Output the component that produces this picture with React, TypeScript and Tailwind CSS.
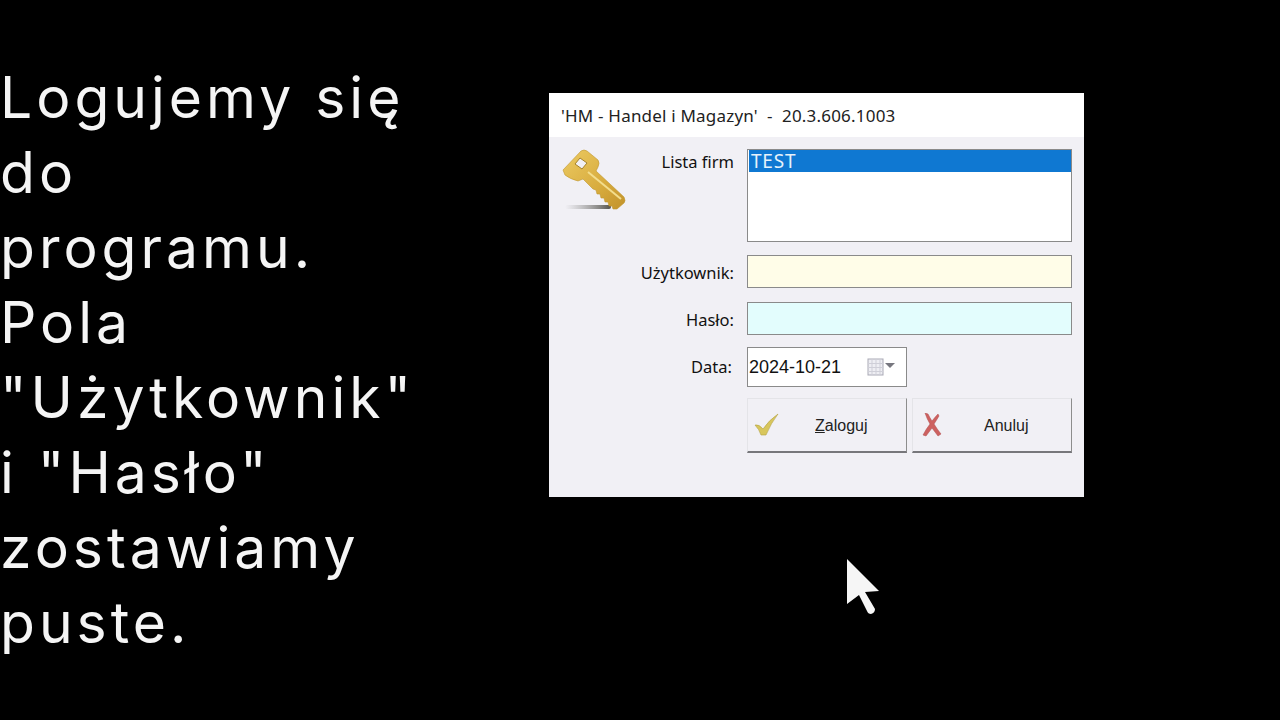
const KeyIcon = () => (
  <svg width="66" height="66" viewBox="0 0 66 66">
    <defs>
      <linearGradient id="gold" x1="0" y1="0" x2="1" y2="1">
        <stop offset="0" stopColor="#ecca62" />
        <stop offset="0.6" stopColor="#d8ac3e" />
        <stop offset="1" stopColor="#c2922a" />
      </linearGradient>
      <linearGradient id="shadow" x1="0" y1="0" x2="1" y2="0">
        <stop offset="0" stopColor="#8a8a8a" stopOpacity="0" />
        <stop offset="1" stopColor="#55534c" />
      </linearGradient>
    </defs>
    <rect x="3" y="56" width="46" height="4" rx="2" fill="url(#shadow)" />
    <path
      d="M1 21 L19 2 Q22 0 25 2 L36 11 Q38 14 36 18 L34 22 L62 48 Q64 52 62 54 L55 60 L51 60 L50 57 L47 57 L46 53 L43 53 L42 49 L39 49 L38 45 L35 45 L34 41 L31 40 L21 30 L16 32 Q8 30 3 26 Z"
      fill="url(#gold)"
      stroke="#c0972f"
      strokeWidth="0.6"
    />
    <path d="M26 23 L59 50" stroke="#f3dd8c" strokeWidth="2" />
    <path d="M18 9 L25 14 L20 20 L13 15 Z" fill="#f1f0f5" stroke="#a5822a" strokeWidth="1" />
  </svg>
);

const CalendarIcon = () => (
  <svg width="28" height="18" viewBox="0 0 28 18">
    <rect x="1" y="1" width="15" height="16" fill="#eeeef3" stroke="#a9a9b5" />
    <path d="M1 5.5H16M1 9.5H16M1 13.5H16M5 1V17M9 1V17M13 1V17" stroke="#cfcfd8" strokeWidth="1" />
    <path d="M18 5H28L23 10Z" fill="#77777f" />
  </svg>
);

const CheckIcon = () => (
  <svg width="26" height="24" viewBox="0 0 26 24">
    <path d="M1 12 Q5 11 9 16 Q15 7 24 1 Q17 10 12 22 L7 22 Q5 16 1 12 Z" fill="#d8c65c" stroke="#b3a344" strokeWidth="0.6" />
  </svg>
);

const CrossIcon = () => (
  <svg width="22" height="24" viewBox="0 0 22 24">
    <path d="M4 0 L7 1 Q9 5 11 8 Q14 4 17 1 L18 3 Q15 8 13 11 Q16 16 20 21 L17 23 Q14 19 11 15 Q8 19 5 23 L2 22 Q5 16 9 11 Q6 6 4 0 Z" fill="#cd6160" stroke="#b04c4c" strokeWidth="0.5" />
  </svg>
);

const Cursor = () => (
  <svg width="36" height="58" viewBox="0 0 36 58" className="absolute left-[846px] top-[558px]">
    <path d="M1 1 L33 33 L19 34 L29 51 Q29 55 25 56 Q22 56 21 53 L13 37 L1 46 Z" fill="#f6f6f6" />
  </svg>
);

const labelClass = "w-[198px] shrink-0 text-right text-[16.5px] text-[#111] pr-[13px]";
const fieldClass = "w-[325px] h-[33px] border border-[#8a8a8a]";

export default function App() {
  return (
    <div className="relative flex h-[720px] w-[1280px] overflow-hidden bg-black">
      {/* instructions */}
      <div className="w-[549px] shrink-0 pt-[60px] text-[57px] leading-[75px] tracking-[4px] text-[#f5f5f5] font-['Inter',sans-serif] font-normal">
        Logujemy się
        <br />
        do
        <br />
        programu.
        <br />
        Pola
        <br />
        "Użytkownik"
        <br />
        i "Hasło"
        <br />
        zostawiamy
        <br />
        puste.
      </div>

      {/* login dialog */}
      <div className="mt-[93px] h-[404px] w-[535px] bg-[#f1f0f5] font-['Noto_Sans',sans-serif]">
        <div className="flex h-[44px] items-center bg-white pl-3 pt-[2px] text-[17px] tracking-[0.2px] text-[#222]">
          'HM - Handel i Magazyn' &nbsp;-&nbsp; 20.3.606.1003
        </div>

        <div className="relative pt-[12px]">
          <div className="absolute left-[13px] top-[12px]">
            <KeyIcon />
          </div>

          <div className="flex h-[93px] items-start">
            <div className={labelClass + " pt-[1px]"}>Lista firm</div>
            <div className="h-[93px] w-[325px] border border-[#8a8a8a] bg-white pl-[1px] pt-0">
              <div className="flex h-[22px] items-center bg-[#0f78d2] pl-[2px] text-[19px] tracking-[0.8px] text-[#e6f2fb]">
                TEST
              </div>
            </div>
          </div>

          <div className="mt-[13px] flex items-center">
            <div className={labelClass + " pt-[3px]"}>Użytkownik:</div>
            <div className={fieldClass + " bg-[#fffde8]"} />
          </div>

          <div className="mt-[14px] flex items-center">
            <div className={labelClass + " pt-[3px]"}>Hasło:</div>
            <div className={fieldClass + " bg-[#e3fdfd]"} />
          </div>

          <div className="mt-[12px] flex items-center">
            <div className={labelClass + " pr-[15px]"}>Data:</div>
            <div className="flex h-[40px] w-[160px] items-center justify-between border border-[#8a8a8a] bg-white pl-[1px] pr-[11px] font-['Liberation_Sans',sans-serif] text-[18px] text-[#111]">
              2024-10-21
              <CalendarIcon />
            </div>
          </div>

          <div className="mt-[11px] flex pl-[198px] font-['Liberation_Sans',sans-serif] text-[16px] text-[#222]">
            <button className="flex h-[55px] w-[160px] items-center border border-[#e4e4e8] border-r-[#8d8d8d] border-b-2 border-b-[#77777b] bg-[#f1f0f5] pl-[6px]">
              <CheckIcon />
              <span className="ml-[35px] pt-[1px]">
                <span className="underline">Z</span>aloguj
              </span>
            </button>
            <button className="ml-[5px] flex h-[55px] w-[160px] items-center border border-[#e4e4e8] border-r-[#8d8d8d] border-b-2 border-b-[#77777b] bg-[#f1f0f5] pl-[8px]">
              <CrossIcon />
              <span className="ml-[41px] pt-[1px]">Anuluj</span>
            </button>
          </div>
        </div>
      </div>

      <Cursor />
    </div>
  );
}
